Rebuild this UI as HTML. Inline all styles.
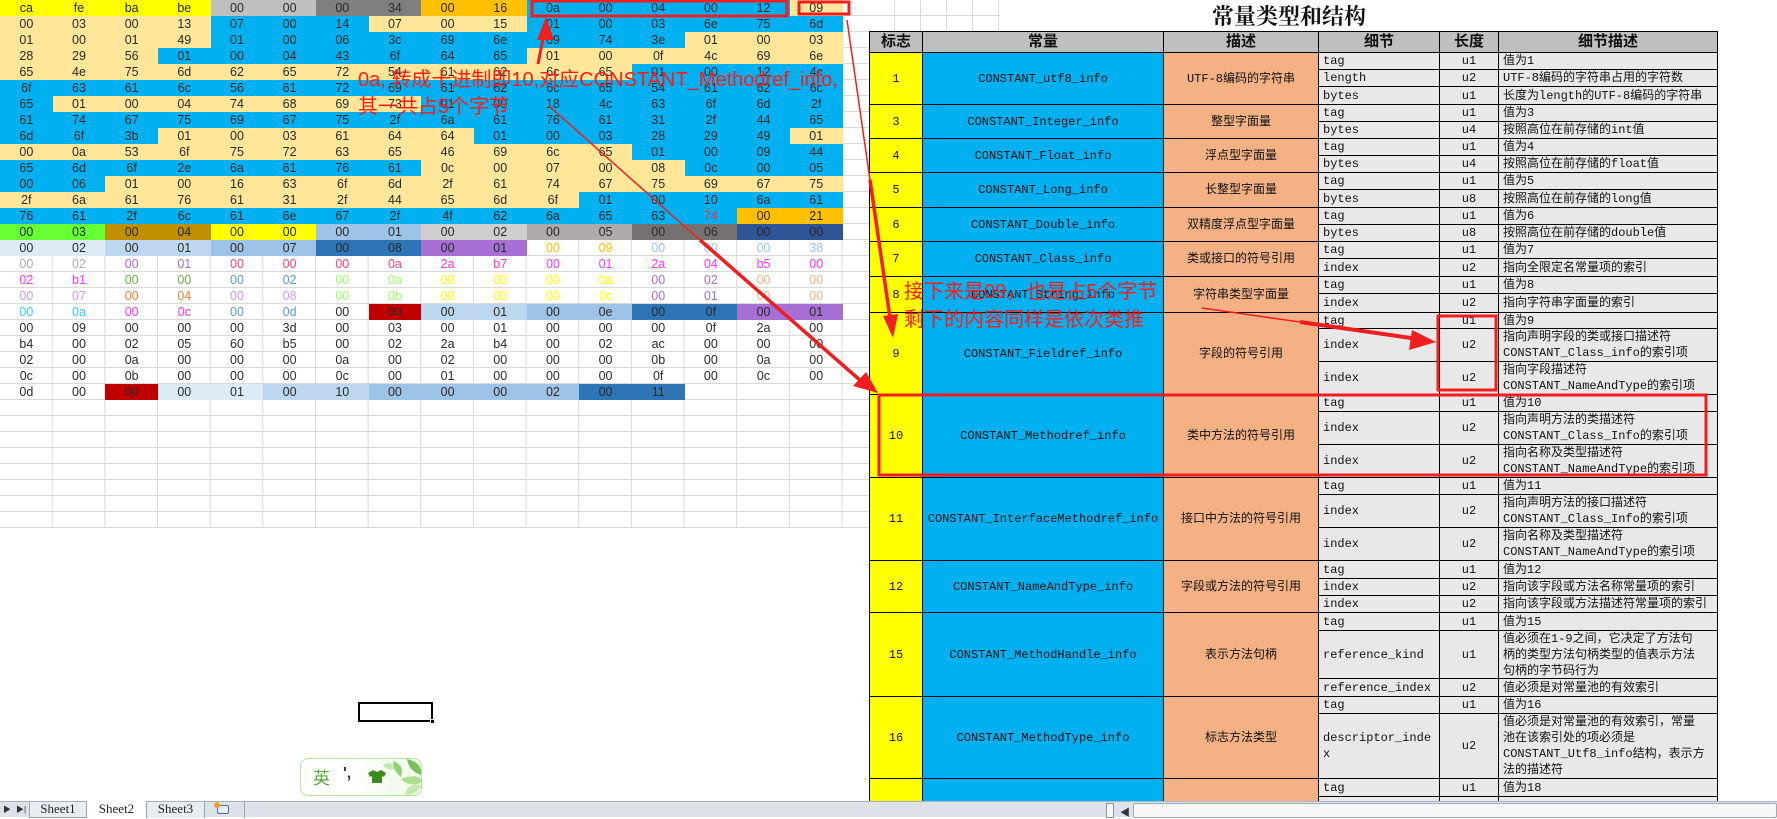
<!DOCTYPE html>
<html><head><meta charset="utf-8">
<style>
*{margin:0;padding:0;box-sizing:border-box}
body{width:1777px;height:817px;overflow:hidden;background:#fff;position:relative;font-family:"Liberation Sans","Noto Sans CJK SC",sans-serif}
#grid{position:absolute;left:0;top:0;width:869px;height:528px;
background-image:linear-gradient(to right,transparent 51.66px,#d9d9d9 51.66px),linear-gradient(to bottom,transparent 15px,#d9d9d9 15px);
background-size:52.66px 16px,52.66px 16px}
#lt{position:absolute;left:0;top:0;border-collapse:collapse;table-layout:fixed;width:842.6px}
#lt td{height:16px;padding:0;text-align:center;font-size:12.5px;line-height:16px;color:#2a2a2a;width:52.66px;overflow:hidden;white-space:nowrap}
.y{background:#ffff00}.g1{background:#bfbfbf}.g2{background:#7f7f7f}.o{background:#ffc000}.b{background:#00b0f0}.c{background:#ffe699}
.gr{background:#66ff33}.au{background:#bf8f00}.lb{background:#9dc3e6}.lg{background:#d0cece}.mg{background:#aeaaaa}.dg{background:#767171}.db{background:#2f5597}
.p1{background:#ddebf7}.p2{background:#bdd7ee}.p3{background:#9dc3e6}.p4{background:#2e75b6}.pu{background:#a66fd4}.rd{background:#c00000}
.k{position:absolute;border:1px solid #000;display:flex;align-items:center;justify-content:center;font-family:"Liberation Mono","Noto Sans CJK SC",monospace;font-size:12px;color:#111;text-align:center;line-height:16px;white-space:nowrap;overflow:hidden}
.k.l{justify-content:flex-start;text-align:left;padding-left:4px}
.Y{background:#ffff00}.B{background:#00b0f0}.S{background:#f4b183}.G{background:#e8e8e8}.H{background:#bfbfbf;font-family:"Liberation Sans","Noto Sans CJK SC",sans-serif;font-weight:bold;font-size:15px}
.ann{position:absolute;color:#ff1a1a;font-size:20px;line-height:24px;white-space:nowrap;font-family:"Liberation Sans","Noto Sans CJK SC",sans-serif}
#bar{position:absolute;left:0;top:801px;width:1777px;height:16px;z-index:50;background:#dde2ea;border-top:1px solid #a9b2bf}
#bar div{position:absolute}
</style></head><body>
<div id="grid"></div>
<table id="lt">
<tr><td class=y>ca<td class=y>fe<td class=y>ba<td class=y>be<td class=g1>00<td class=g1>00<td class=g2>00<td class=g2>34<td class=o>00<td class=o>16<td class=b>0a<td class=b>00<td class=b>04<td class=b>00<td class=b>12<td class=c>09</tr>
<tr><td class=c>00<td class=c>03<td class=c>00<td class=c>13<td class=b>07<td class=b>00<td class=b>14<td class=c>07<td class=c>00<td class=c>15<td class=b>01<td class=b>00<td class=b>03<td class=b>6e<td class=b>75<td class=b>6d</tr>
<tr><td class=c>01<td class=c>00<td class=c>01<td class=c>49<td class=b>01<td class=b>00<td class=b>06<td class=b>3c<td class=b>69<td class=b>6e<td class=b>69<td class=b>74<td class=b>3e<td class=c>01<td class=c>00<td class=c>03</tr>
<tr><td class=c>28<td class=c>29<td class=c>56<td class=b>01<td class=b>00<td class=b>04<td class=b>43<td class=b>6f<td class=b>64<td class=b>65<td class=c>01<td class=c>00<td class=c>0f<td class=c>4c<td class=c>69<td class=c>6e</tr>
<tr><td class=c>65<td class=c>4e<td class=c>75<td class=c>6d<td class=c>62<td class=c>65<td class=c>72<td class=c>54<td class=c>61<td class=c>62<td class=c>6c<td class=c>65<td class=b>01<td class=b>00<td class=b>12<td class=b>4c</tr>
<tr><td class=b>6f<td class=b>63<td class=b>61<td class=b>6c<td class=b>56<td class=b>61<td class=b>72<td class=b>69<td class=b>61<td class=b>62<td class=b>6c<td class=b>65<td class=b>54<td class=b>61<td class=b>62<td class=b>6c</tr>
<tr><td class=b>65<td class=c>01<td class=c>00<td class=c>04<td class=c>74<td class=c>68<td class=c>69<td class=c>73<td class=b>01<td class=b>00<td class=b>18<td class=b>4c<td class=b>63<td class=b>6f<td class=b>6d<td class=b>2f</tr>
<tr><td class=b>61<td class=b>74<td class=b>67<td class=b>75<td class=b>69<td class=b>67<td class=b>75<td class=b>2f<td class=b>6a<td class=b>61<td class=b>76<td class=b>61<td class=b>31<td class=b>2f<td class=b>44<td class=b>65</tr>
<tr><td class=b>6d<td class=b>6f<td class=b>3b<td class=c>01<td class=c>00<td class=c>03<td class=c>61<td class=c>64<td class=c>64<td class=b>01<td class=b>00<td class=b>03<td class=b>28<td class=b>29<td class=b>49<td class=c>01</tr>
<tr><td class=c>00<td class=c>0a<td class=c>53<td class=c>6f<td class=c>75<td class=c>72<td class=c>63<td class=c>65<td class=c>46<td class=c>69<td class=c>6c<td class=c>65<td class=b>01<td class=b>00<td class=b>09<td class=b>44</tr>
<tr><td class=b>65<td class=b>6d<td class=b>6f<td class=b>2e<td class=b>6a<td class=b>61<td class=b>76<td class=b>61<td class=c>0c<td class=c>00<td class=c>07<td class=c>00<td class=c>08<td class=b>0c<td class=b>00<td class=b>05</tr>
<tr><td class=b>00<td class=b>06<td class=c>01<td class=c>00<td class=c>16<td class=c>63<td class=c>6f<td class=c>6d<td class=c>2f<td class=c>61<td class=c>74<td class=c>67<td class=c>75<td class=c>69<td class=c>67<td class=c>75</tr>
<tr><td class=c>2f<td class=c>6a<td class=c>61<td class=c>76<td class=c>61<td class=c>31<td class=c>2f<td class=c>44<td class=c>65<td class=c>6d<td class=c>6f<td class=b>01<td class=b>00<td class=b>10<td class=b>6a<td class=b>61</tr>
<tr><td class=b>76<td class=b>61<td class=b>2f<td class=b>6c<td class=b>61<td class=b>6e<td class=b>67<td class=b>2f<td class=b>4f<td class=b>62<td class=b>6a<td class=b>65<td class=b>63<td class=b style="color:#e8344e">74<td class=o>00<td class=o>21</tr>
<tr><td class=gr>00<td class=gr>03<td class=au>00<td class=au>04<td class=y>00<td class=y>00<td class=lb>00<td class=lb>01<td class=lg>00<td class=lg>02<td class=mg>00<td class=mg>05<td class=dg>00<td class=dg>06<td class=db>00<td class=db>00</tr>
<tr><td class=p1>00<td class=p1>02<td class=p2>00<td class=p2>01<td class=p3>00<td class=p3>07<td class=p4>00<td class=p4>08<td class=pu>00<td class=pu>01<td style="color:#ffc000">00<td style="color:#ffc000">09<td style="color:#9dc3e6">00<td style="color:#9dc3e6">00<td style="color:#9dc3e6">00<td style="color:#9dc3e6">38</tr>
<tr><td style="color:#aeaaaa">00<td style="color:#aeaaaa">02<td style="color:#a66fd4">00<td style="color:#a66fd4">01<td style="color:#ff3f7f">00<td style="color:#ff3f7f">00<td style="color:#ff3f7f">00<td style="color:#ff3f7f">0a<td style="color:#ff33cc">2a<td style="color:#ff33cc">b7<td style="color:#ff33ff">00<td style="color:#ff33ff">01<td style="color:#ff33ff">2a<td style="color:#ff33ff">04<td style="color:#ff33ff">b5<td style="color:#ff33ff">00</tr>
<tr><td style="color:#ff33ff">02<td style="color:#ff33ff">b1<td style="color:#70ad47">00<td style="color:#70ad47">00<td style="color:#5b9bd5">00<td style="color:#5b9bd5">02<td style="color:#99ff66">00<td style="color:#99ff66">0a<td style="color:#ffff00">00<td style="color:#ffff00">00<td style="color:#ffff00">00<td style="color:#ffff00">0a<td style="color:#a66fd4">00<td style="color:#a66fd4">02<td style="color:#f4b183">00<td style="color:#f4b183">00</tr>
<tr><td style="color:#cc99ff">00<td style="color:#cc99ff">07<td style="color:#ed7d31">00<td style="color:#ed7d31">04<td style="color:#cc99ff">00<td style="color:#cc99ff">08<td style="color:#99ff66">00<td style="color:#99ff66">0b<td style="color:#ffff00">00<td style="color:#ffff00">00<td style="color:#ffff00">00<td style="color:#ffff00">0c<td style="color:#a66fd4">00<td style="color:#a66fd4">01<td style="color:#f4b183">00<td style="color:#f4b183">00</tr>
<tr><td style="color:#33ccff">00<td style="color:#33ccff">0a<td style="color:#ff33ff">00<td style="color:#ff33ff">0c<td style="color:#5b9bd5">00<td style="color:#5b9bd5">0d<td>00<td class=rd>00<td class=p2>00<td class=p2>01<td class=p3>00<td class=p3>0e<td class=p4>00<td class=p4>0f<td class=pu>00<td class=pu>01</tr>
<tr><td>00<td>09<td>00<td>00<td>00<td>3d<td>00<td>03<td>00<td>01<td>00<td>00<td>00<td>0f<td>2a<td>00</tr>
<tr><td>b4<td>00<td>02<td>05<td>60<td>b5<td>00<td>02<td>2a<td>b4<td>00<td>02<td>ac<td>00<td>00<td>00</tr>
<tr><td>02<td>00<td>0a<td>00<td>00<td>00<td>0a<td>00<td>02<td>00<td>00<td>00<td>0b<td>00<td>0a<td>00</tr>
<tr><td>0c<td>00<td>0b<td>00<td>00<td>00<td>0c<td>00<td>01<td>00<td>00<td>00<td>0f<td>00<td>0c<td>00</tr>
<tr><td>0d<td>00<td class=rd>00<td class=p1>00<td class=p1>01<td class=p2>00<td class=p2>10<td class=p3>00<td class=p3>00<td class=p3>00<td class=p3>02<td class=p4>00<td class=p4>11<td><td><td></tr>
</table>

<div style="position:absolute;left:869px;top:0;width:131px;height:31px;background-image:linear-gradient(to right,transparent 25px,#d9d9d9 25px),linear-gradient(to bottom,transparent 15px,#d9d9d9 15px);background-size:26px 16px"></div>

<div style="position:absolute;left:1212px;top:2px;font-family:'Noto Serif CJK SC',serif;font-weight:bold;font-size:22px;line-height:28px;color:#111">常量类型和结构</div>

<div class="k H" style="left:869px;top:31px;width:54px;height:22px">标志</div>
<div class="k H" style="left:922px;top:31px;width:242px;height:22px">常量</div>
<div class="k H" style="left:1163px;top:31px;width:156px;height:22px">描述</div>
<div class="k H" style="left:1318px;top:31px;width:122px;height:22px">细节</div>
<div class="k H" style="left:1439px;top:31px;width:60px;height:22px">长度</div>
<div class="k H" style="left:1498px;top:31px;width:220px;height:22px">细节描述</div>

<div class="k Y" style="left:869px;top:52px;width:54px;height:53px">1</div>
<div class="k B" style="left:922px;top:52px;width:242px;height:53px">CONSTANT_utf8_info</div>
<div class="k S" style="left:1163px;top:52px;width:156px;height:53px">UTF-8编码的字符串</div>
<div class="k G l" style="left:1318px;top:52px;width:122px;height:18px">tag</div><div class="k G" style="left:1439px;top:52px;width:60px;height:18px">u1</div><div class="k G l" style="left:1498px;top:52px;width:220px;height:18px">值为1</div>
<div class="k G l" style="left:1318px;top:69px;width:122px;height:18px">length</div><div class="k G" style="left:1439px;top:69px;width:60px;height:18px">u2</div><div class="k G l" style="left:1498px;top:69px;width:220px;height:18px">UTF-8编码的字符串占用的字符数</div>
<div class="k G l" style="left:1318px;top:86px;width:122px;height:19px">bytes</div><div class="k G" style="left:1439px;top:86px;width:60px;height:19px">u1</div><div class="k G l" style="left:1498px;top:86px;width:220px;height:19px">长度为length的UTF-8编码的字符串</div>

<div class="k Y" style="left:869px;top:104px;width:54px;height:35px">3</div>
<div class="k B" style="left:922px;top:104px;width:242px;height:35px">CONSTANT_Integer_info</div>
<div class="k S" style="left:1163px;top:104px;width:156px;height:35px">整型字面量</div>
<div class="k G l" style="left:1318px;top:104px;width:122px;height:18px">tag</div><div class="k G" style="left:1439px;top:104px;width:60px;height:18px">u1</div><div class="k G l" style="left:1498px;top:104px;width:220px;height:18px">值为3</div>
<div class="k G l" style="left:1318px;top:121px;width:122px;height:18px">bytes</div><div class="k G" style="left:1439px;top:121px;width:60px;height:18px">u4</div><div class="k G l" style="left:1498px;top:121px;width:220px;height:18px">按照高位在前存储的int值</div>

<div class="k Y" style="left:869px;top:138px;width:54px;height:35px">4</div>
<div class="k B" style="left:922px;top:138px;width:242px;height:35px">CONSTANT_Float_info</div>
<div class="k S" style="left:1163px;top:138px;width:156px;height:35px">浮点型字面量</div>
<div class="k G l" style="left:1318px;top:138px;width:122px;height:18px">tag</div><div class="k G" style="left:1439px;top:138px;width:60px;height:18px">u1</div><div class="k G l" style="left:1498px;top:138px;width:220px;height:18px">值为4</div>
<div class="k G l" style="left:1318px;top:155px;width:122px;height:18px">bytes</div><div class="k G" style="left:1439px;top:155px;width:60px;height:18px">u4</div><div class="k G l" style="left:1498px;top:155px;width:220px;height:18px">按照高位在前存储的float值</div>

<div class="k Y" style="left:869px;top:172px;width:54px;height:36px">5</div>
<div class="k B" style="left:922px;top:172px;width:242px;height:36px">CONSTANT_Long_info</div>
<div class="k S" style="left:1163px;top:172px;width:156px;height:36px">长整型字面量</div>
<div class="k G l" style="left:1318px;top:172px;width:122px;height:18px">tag</div><div class="k G" style="left:1439px;top:172px;width:60px;height:18px">u1</div><div class="k G l" style="left:1498px;top:172px;width:220px;height:18px">值为5</div>
<div class="k G l" style="left:1318px;top:189px;width:122px;height:19px">bytes</div><div class="k G" style="left:1439px;top:189px;width:60px;height:19px">u8</div><div class="k G l" style="left:1498px;top:189px;width:220px;height:19px">按照高位在前存储的long值</div>

<div class="k Y" style="left:869px;top:207px;width:54px;height:35px">6</div>
<div class="k B" style="left:922px;top:207px;width:242px;height:35px">CONSTANT_Double_info</div>
<div class="k S" style="left:1163px;top:207px;width:156px;height:35px">双精度浮点型字面量</div>
<div class="k G l" style="left:1318px;top:207px;width:122px;height:18px">tag</div><div class="k G" style="left:1439px;top:207px;width:60px;height:18px">u1</div><div class="k G l" style="left:1498px;top:207px;width:220px;height:18px">值为6</div>
<div class="k G l" style="left:1318px;top:224px;width:122px;height:18px">bytes</div><div class="k G" style="left:1439px;top:224px;width:60px;height:18px">u8</div><div class="k G l" style="left:1498px;top:224px;width:220px;height:18px">按照高位在前存储的double值</div>

<div class="k Y" style="left:869px;top:241px;width:54px;height:36px">7</div>
<div class="k B" style="left:922px;top:241px;width:242px;height:36px">CONSTANT_Class_info</div>
<div class="k S" style="left:1163px;top:241px;width:156px;height:36px">类或接口的符号引用</div>
<div class="k G l" style="left:1318px;top:241px;width:122px;height:18px">tag</div><div class="k G" style="left:1439px;top:241px;width:60px;height:18px">u1</div><div class="k G l" style="left:1498px;top:241px;width:220px;height:18px">值为7</div>
<div class="k G l" style="left:1318px;top:258px;width:122px;height:19px">index</div><div class="k G" style="left:1439px;top:258px;width:60px;height:19px">u2</div><div class="k G l" style="left:1498px;top:258px;width:220px;height:19px">指向全限定名常量项的索引</div>

<div class="k Y" style="left:869px;top:276px;width:54px;height:37px">8</div>
<div class="k B" style="left:922px;top:276px;width:242px;height:37px">CONSTANT_String_info</div>
<div class="k S" style="left:1163px;top:276px;width:156px;height:37px">字符串类型字面量</div>
<div class="k G l" style="left:1318px;top:276px;width:122px;height:18px">tag</div><div class="k G" style="left:1439px;top:276px;width:60px;height:18px">u1</div><div class="k G l" style="left:1498px;top:276px;width:220px;height:18px">值为8</div>
<div class="k G l" style="left:1318px;top:293px;width:122px;height:20px">index</div><div class="k G" style="left:1439px;top:293px;width:60px;height:20px">u2</div><div class="k G l" style="left:1498px;top:293px;width:220px;height:20px">指向字符串字面量的索引</div>

<div class="k Y" style="left:869px;top:312px;width:54px;height:83px">9</div>
<div class="k B" style="left:922px;top:312px;width:242px;height:83px">CONSTANT_Fieldref_info</div>
<div class="k S" style="left:1163px;top:312px;width:156px;height:83px">字段的符号引用</div>
<div class="k G l" style="left:1318px;top:312px;width:122px;height:17px">tag</div><div class="k G" style="left:1439px;top:312px;width:60px;height:17px">u1</div><div class="k G l" style="left:1498px;top:312px;width:220px;height:17px">值为9</div>
<div class="k G l" style="left:1318px;top:328px;width:122px;height:34px">index</div><div class="k G" style="left:1439px;top:328px;width:60px;height:34px">u2</div><div class="k G l" style="left:1498px;top:328px;width:220px;height:34px">指向声明字段的类或接口描述符<br>CONSTANT_Class_info的索引项</div>
<div class="k G l" style="left:1318px;top:361px;width:122px;height:34px">index</div><div class="k G" style="left:1439px;top:361px;width:60px;height:34px">u2</div><div class="k G l" style="left:1498px;top:361px;width:220px;height:34px">指向字段描述符<br>CONSTANT_NameAndType的索引项</div>

<div class="k Y" style="left:869px;top:394px;width:54px;height:84px">10</div>
<div class="k B" style="left:922px;top:394px;width:242px;height:84px">CONSTANT_Methodref_info</div>
<div class="k S" style="left:1163px;top:394px;width:156px;height:84px">类中方法的符号引用</div>
<div class="k G l" style="left:1318px;top:394px;width:122px;height:18px">tag</div><div class="k G" style="left:1439px;top:394px;width:60px;height:18px">u1</div><div class="k G l" style="left:1498px;top:394px;width:220px;height:18px">值为10</div>
<div class="k G l" style="left:1318px;top:411px;width:122px;height:34px">index</div><div class="k G" style="left:1439px;top:411px;width:60px;height:34px">u2</div><div class="k G l" style="left:1498px;top:411px;width:220px;height:34px">指向声明方法的类描述符<br>CONSTANT_Class_Info的索引项</div>
<div class="k G l" style="left:1318px;top:444px;width:122px;height:34px">index</div><div class="k G" style="left:1439px;top:444px;width:60px;height:34px">u2</div><div class="k G l" style="left:1498px;top:444px;width:220px;height:34px">指向名称及类型描述符<br>CONSTANT_NameAndType的索引项</div>

<div class="k Y" style="left:869px;top:477px;width:54px;height:84px">11</div>
<div class="k B" style="left:922px;top:477px;width:242px;height:84px">CONSTANT_InterfaceMethodref_info</div>
<div class="k S" style="left:1163px;top:477px;width:156px;height:84px">接口中方法的符号引用</div>
<div class="k G l" style="left:1318px;top:477px;width:122px;height:18px">tag</div><div class="k G" style="left:1439px;top:477px;width:60px;height:18px">u1</div><div class="k G l" style="left:1498px;top:477px;width:220px;height:18px">值为11</div>
<div class="k G l" style="left:1318px;top:494px;width:122px;height:34px">index</div><div class="k G" style="left:1439px;top:494px;width:60px;height:34px">u2</div><div class="k G l" style="left:1498px;top:494px;width:220px;height:34px">指向声明方法的接口描述符<br>CONSTANT_Class_Info的索引项</div>
<div class="k G l" style="left:1318px;top:527px;width:122px;height:34px">index</div><div class="k G" style="left:1439px;top:527px;width:60px;height:34px">u2</div><div class="k G l" style="left:1498px;top:527px;width:220px;height:34px">指向名称及类型描述符<br>CONSTANT_NameAndType的索引项</div>

<div class="k Y" style="left:869px;top:560px;width:54px;height:53px">12</div>
<div class="k B" style="left:922px;top:560px;width:242px;height:53px">CONSTANT_NameAndType_info</div>
<div class="k S" style="left:1163px;top:560px;width:156px;height:53px">字段或方法的符号引用</div>
<div class="k G l" style="left:1318px;top:560px;width:122px;height:19px">tag</div><div class="k G" style="left:1439px;top:560px;width:60px;height:19px">u1</div><div class="k G l" style="left:1498px;top:560px;width:220px;height:19px">值为12</div>
<div class="k G l" style="left:1318px;top:578px;width:122px;height:18px">index</div><div class="k G" style="left:1439px;top:578px;width:60px;height:18px">u2</div><div class="k G l" style="left:1498px;top:578px;width:220px;height:18px">指向该字段或方法名称常量项的索引</div>
<div class="k G l" style="left:1318px;top:595px;width:122px;height:18px">index</div><div class="k G" style="left:1439px;top:595px;width:60px;height:18px">u2</div><div class="k G l" style="left:1498px;top:595px;width:220px;height:18px">指向该字段或方法描述符常量项的索引</div>

<div class="k Y" style="left:869px;top:612px;width:54px;height:85px">15</div>
<div class="k B" style="left:922px;top:612px;width:242px;height:85px">CONSTANT_MethodHandle_info</div>
<div class="k S" style="left:1163px;top:612px;width:156px;height:85px">表示方法句柄</div>
<div class="k G l" style="left:1318px;top:612px;width:122px;height:19px">tag</div><div class="k G" style="left:1439px;top:612px;width:60px;height:19px">u1</div><div class="k G l" style="left:1498px;top:612px;width:220px;height:19px">值为15</div>
<div class="k G l" style="left:1318px;top:630px;width:122px;height:49px">reference_kind</div><div class="k G" style="left:1439px;top:630px;width:60px;height:49px">u1</div><div class="k G l" style="left:1498px;top:630px;width:220px;height:49px">值必须在1-9之间，它决定了方法句<br>柄的类型方法句柄类型的值表示方法<br>句柄的字节码行为</div>
<div class="k G l" style="left:1318px;top:678px;width:122px;height:19px">reference_index</div><div class="k G" style="left:1439px;top:678px;width:60px;height:19px">u2</div><div class="k G l" style="left:1498px;top:678px;width:220px;height:19px">值必须是对常量池的有效索引</div>

<div class="k Y" style="left:869px;top:696px;width:54px;height:83px">16</div>
<div class="k B" style="left:922px;top:696px;width:242px;height:83px">CONSTANT_MethodType_info</div>
<div class="k S" style="left:1163px;top:696px;width:156px;height:83px">标志方法类型</div>
<div class="k G l" style="left:1318px;top:696px;width:122px;height:18px">tag</div><div class="k G" style="left:1439px;top:696px;width:60px;height:18px">u1</div><div class="k G l" style="left:1498px;top:696px;width:220px;height:18px">值为16</div>
<div class="k G l" style="left:1318px;top:713px;width:122px;height:66px">descriptor_inde<br>x</div><div class="k G" style="left:1439px;top:713px;width:60px;height:66px">u2</div><div class="k G l" style="left:1498px;top:713px;width:220px;height:66px">值必须是对常量池的有效索引，常量<br>池在该索引处的项必须是<br>CONSTANT_Utf8_info结构，表示方<br>法的描述符</div>

<div class="k Y" style="left:869px;top:778px;width:54px;height:24px"></div>
<div class="k B" style="left:922px;top:778px;width:242px;height:24px"></div>
<div class="k S" style="left:1163px;top:778px;width:156px;height:24px"></div>
<div class="k G l" style="left:1318px;top:778px;width:122px;height:19px">tag</div><div class="k G" style="left:1439px;top:778px;width:60px;height:19px">u1</div><div class="k G l" style="left:1498px;top:778px;width:220px;height:19px">值为18</div>
<div class="k G l" style="left:1318px;top:796px;width:122px;height:6px"></div><div class="k G" style="left:1439px;top:796px;width:60px;height:6px"></div><div class="k G l" style="left:1498px;top:796px;width:220px;height:6px"></div>

<div style="position:absolute;left:358px;top:702px;width:75px;height:20px;border:2px solid #000"></div>
<div style="position:absolute;left:430px;top:719px;width:5px;height:5px;background:#000;border:1px solid #fff"></div>

<div style="position:absolute;left:300px;top:758px;width:122px;height:38px;border:1px solid #b8e2a2;border-radius:8px;background:linear-gradient(to right,#fff 40%,#eef8e6);overflow:hidden">
<div style="position:absolute;left:12px;top:8px;font-size:17px;color:#5aa83a;font-family:'Noto Sans CJK SC',sans-serif;line-height:20px">英</div>
<div style="position:absolute;left:42px;top:6px;font-size:16px;color:#333;font-weight:bold">&#39;,</div>
<svg style="position:absolute;left:64px;top:0" width="58" height="38" viewBox="0 0 58 38">
<path d="M3 14 L8 11 L12 13 L16 11 L21 14 L19 18 L17 17 L17 24 L7 24 L7 17 L5 18Z" fill="#3c8a1e"/>
<path d="M28 2 Q40 6 36 18 Q28 12 28 2Z" fill="#7cc755" opacity=".8"/>
<path d="M42 0 Q58 4 56 16 Q44 12 42 0Z" fill="#5bb33a" opacity=".8"/>
<path d="M36 20 Q52 14 58 22 Q46 30 36 20Z" fill="#8fd46a" opacity=".7"/>
<path d="M40 36 Q42 24 56 26 Q52 36 40 36Z" fill="#b6e39a" opacity=".8"/>
<path d="M18 6 Q26 0 30 10 Q22 12 18 6Z" fill="#a4d98a" opacity=".6"/>
</svg></div>

<div id="bar">
<div style="left:3px;top:2px;font-size:8px;color:#333">&#9654;</div>
<div style="left:16px;top:2px;font-size:8px;color:#333">&#9654;|</div>
<div style="left:29px;top:0;width:58px;height:16px;background:#e9ecf1;border:1px solid #9aa4b2;border-top:none;font-family:'Liberation Serif',serif;font-size:13px;line-height:14px;text-align:center;color:#222">Sheet1</div>
<div style="left:87px;top:-1px;width:60px;height:17px;background:#fff;border-right:1px solid #9aa4b2;font-family:'Liberation Serif',serif;font-size:13px;line-height:16px;text-align:center;color:#222">Sheet2</div>
<div style="left:147px;top:0;width:58px;height:16px;background:#e9ecf1;border-right:1px solid #9aa4b2;font-family:'Liberation Serif',serif;font-size:13px;line-height:14px;text-align:center;color:#222">Sheet3</div>
<div style="left:205px;top:0;width:40px;height:16px;border-right:1px solid #9aa4b2"><div style="left:12px;top:3px;width:12px;height:9px;border:1px solid #4a6fa5;background:#e6eefa;border-radius:2px"></div><div style="left:9px;top:0;width:6px;height:6px;background:#f0a020;border-radius:3px"></div></div>
<div style="left:1106px;top:1px;width:8px;height:15px;border:1px solid #8c96a4;background:#f4f6f9"></div>
<div style="left:1120px;top:2px;font-size:10px;color:#333">&#9664;</div>
<div style="left:1133px;top:1px;width:644px;height:15px;border:1px solid #a0a9b6;border-radius:2px;background:#f7f8fa"></div>
</div>

<svg style="position:absolute;left:0;top:0;z-index:40" width="1777" height="817">
<g fill="none" stroke="#f01e1e" stroke-width="3">
<rect x="532" y="1" width="255" height="15"/>
<rect x="799" y="2" width="50" height="12"/>
<rect x="1438" y="316" width="58" height="74"/>
<rect x="879" y="395" width="827" height="80"/>
</g>
<g stroke="#f01e1e" fill="#f01e1e">
<line x1="538" y1="64" x2="544" y2="34" stroke-width="3"/>
<polygon points="546,17 537,40 554,40" stroke="none"/>
<line x1="549" y1="106" x2="700" y2="240" stroke-width="1.5"/>
<line x1="700" y1="240" x2="862" y2="382" stroke-width="3.5"/>
<polygon points="878,393 853,386 866,372" stroke="none"/>
<line x1="847" y1="20" x2="870" y2="180" stroke-width="1.5"/>
<line x1="870" y1="180" x2="890" y2="318" stroke-width="3.5"/>
<polygon points="893,338 883,316 898,314" stroke="none"/>
<line x1="1202" y1="308" x2="1300" y2="322" stroke-width="1.5"/>
<line x1="1300" y1="322" x2="1418" y2="339" stroke-width="4"/>
<polygon points="1436,342 1412,330 1409,350" stroke="none"/>
</g>
</svg>
<div class="ann" style="left:358px;top:68px;z-index:41">0a, 转成十进制即10,对应CONSTANT_Methodref_info,</div>
<div class="ann" style="left:358px;top:95px;z-index:41">其一共占5个字节</div>
<div class="ann" style="left:904px;top:280px;z-index:41">接下来是09，也是占5个字节</div>
<div class="ann" style="left:904px;top:308px;z-index:41">剩下的内容同样是依次类推</div>
</body></html>
